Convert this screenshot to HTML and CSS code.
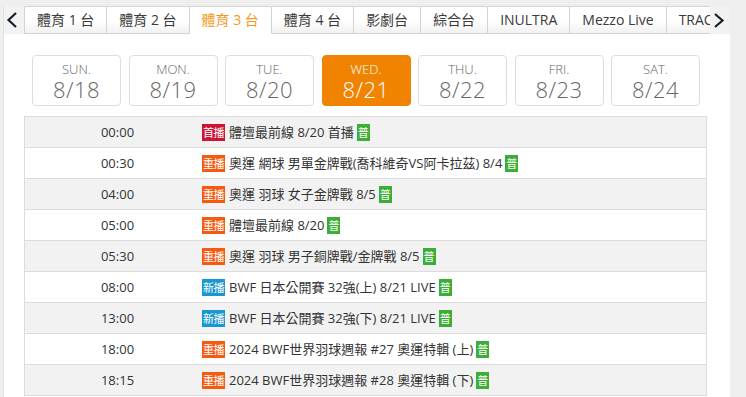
FILE: index.html
```html
<!DOCTYPE html>
<html lang="zh-Hant">
<head>
    <meta charset="UTF-8">
    <meta name="viewport" content="width=device-width, initial-scale=1.0">
    <title>節目表</title>
    <link rel="stylesheet" href="styles.css">
</head>
<body>
    <div class="wrap">
        <div class="tabbar">
            <button class="arrow prev" aria-label="上一頁">
                <svg width="20" height="28" viewBox="0 0 20 28"><polyline points="12,7 4.5,14 12,21" fill="none" stroke="#16202c" stroke-width="2.2"/></svg>
            </button>
            <div class="tabs">
                <ul>
                    <li>體育 1 台</li>
                    <li>體育 2 台</li>
                    <li class="active">體育 3 台</li>
                    <li>體育 4 台</li>
                    <li>影劇台</li>
                    <li>綜合台</li>
                    <li>INULTRA</li>
                    <li>Mezzo Live</li>
                    <li>TRACE Sport</li>
                </ul>
            </div>
            <button class="arrow next" aria-label="下一頁">
                <svg width="20" height="28" viewBox="0 0 20 28"><polyline points="5,8 12.5,14.5 5,21" fill="none" stroke="#16202c" stroke-width="2.2"/></svg>
            </button>
        </div>

        <div class="days">
            <div class="day"><span class="dow">SUN.</span><span class="date">8/18</span></div>
            <div class="day"><span class="dow">MON.</span><span class="date">8/19</span></div>
            <div class="day"><span class="dow">TUE.</span><span class="date">8/20</span></div>
            <div class="day active"><span class="dow">WED.</span><span class="date">8/21</span></div>
            <div class="day"><span class="dow">THU.</span><span class="date">8/22</span></div>
            <div class="day"><span class="dow">FRI.</span><span class="date">8/23</span></div>
            <div class="day"><span class="dow">SAT.</span><span class="date">8/24</span></div>
        </div>

        <table class="schedule">
            <tr>
                <td class="time">00:00</td>
                <td class="prog"><span class="tag first">首播</span>體壇最前線 8/20 首播<span class="rate">普</span></td>
            </tr>
            <tr>
                <td class="time">00:30</td>
                <td class="prog"><span class="tag rerun">重播</span>奧運 網球 男單金牌戰(喬科維奇VS阿卡拉茲) 8/4<span class="rate">普</span></td>
            </tr>
            <tr>
                <td class="time">04:00</td>
                <td class="prog"><span class="tag rerun">重播</span>奧運 羽球 女子金牌戰 8/5<span class="rate">普</span></td>
            </tr>
            <tr>
                <td class="time">05:00</td>
                <td class="prog"><span class="tag rerun">重播</span>體壇最前線 8/20<span class="rate">普</span></td>
            </tr>
            <tr>
                <td class="time">05:30</td>
                <td class="prog"><span class="tag rerun">重播</span>奧運 羽球 男子銅牌戰/金牌戰 8/5<span class="rate">普</span></td>
            </tr>
            <tr>
                <td class="time">08:00</td>
                <td class="prog"><span class="tag new">新播</span>BWF 日本公開賽 32強(上) 8/21 LIVE<span class="rate">普</span></td>
            </tr>
            <tr>
                <td class="time">13:00</td>
                <td class="prog"><span class="tag new">新播</span>BWF 日本公開賽 32強(下) 8/21 LIVE<span class="rate">普</span></td>
            </tr>
            <tr>
                <td class="time">18:00</td>
                <td class="prog"><span class="tag rerun">重播</span>2024 BWF世界羽球週報 #27 奧運特輯 (上)<span class="rate">普</span></td>
            </tr>
            <tr>
                <td class="time">18:15</td>
                <td class="prog"><span class="tag rerun">重播</span>2024 BWF世界羽球週報 #28 奧運特輯 (下)<span class="rate">普</span></td>
            </tr>
        </table>
    </div>
</body>
</html>
```

FILE: styles.css
```css
body {
    margin: 0;
    background-color: #efefef;
    font-family: "Open Sans", "Noto Sans CJK TC", sans-serif;
    color: #333333;
    font-size: 14px;
}

.wrap {
    margin: 6px 0 0 3px;
    width: 726px;
    min-height: 400px;
    background: #ffffff;
    border-left: 1px solid #e2e2e2;
}

.tabbar {
    display: flex;
    height: 28px;
}

.arrow {
    width: 20px;
    height: 28px;
    padding: 0;
    border: none;
    background: #f2f2f2;
    flex-shrink: 0;
    cursor: pointer;
}

.arrow svg {
    display: block;
}

.tabs {
    flex: 1;
    overflow: hidden;
    background: #efefef;
}

.tabs ul {
    display: flex;
    margin: 0;
    padding: 0;
    list-style: none;
    height: 28px;
}

.tabs li {
    flex-shrink: 0;
    padding: 0 12px;
    line-height: 26px;
    white-space: nowrap;
    border: 1px solid #d3d3d3;
    border-left: none;
    background: linear-gradient(#ffffff 55%, #f1f1f1);
    color: #3a3a3a;
}

.tabs li:first-child {
    border-left: 1px solid #d3d3d3;
}

.tabs li.active {
    background: #ffffff;
    border-bottom-color: #ffffff;
    color: #f39a1e;
}

.days {
    display: grid;
    grid-template-columns: repeat(7, 1fr);
    gap: 7.5px;
    width: 668px;
    margin: 21px 0 0 28px;
}

.day {
    display: flex;
    flex-direction: column;
    align-items: center;
    height: 49px;
    border: 1px solid #dddddd;
    border-radius: 4px;
    color: #666666;
}

.day .dow {
    margin-top: 6px;
    font-size: 13px;
    line-height: 14px;
    font-weight: 300;
}

.day .date {
    font-size: 22px;
    line-height: 26px;
    font-weight: 300;
    letter-spacing: 0.5px;
}

.day.active {
    background: #f08300;
    border-color: #f08300;
    color: #ffffff;
}

.schedule {
    margin: 10px 0 0 20px;
    width: 683px;
    border-collapse: collapse;
    border: 1px solid #dcdcdc;
    font-size: 13px;
}

.schedule td {
    height: 30px;
    padding: 0;
    border-top: 1px solid #dcdcdc;
    vertical-align: middle;
}

.schedule tr:nth-child(odd) td {
    background: #f2f2f2;
}

.schedule .time {
    width: 169px;
    padding-left: 8px;
    text-align: center;
}

.schedule .prog {
    white-space: nowrap;
}

.tag {
    display: inline-block;
    width: 23px;
    height: 17px;
    margin-right: 4px;
    font-size: 11px;
    line-height: 17px;
    text-align: center;
    color: #ffffff;
    vertical-align: middle;
    position: relative;
    top: -1px;
    letter-spacing: -0.5px;
}

.tag.first {
    background: #cf1332;
}

.tag.rerun {
    background: #f55a0f;
}

.tag.new {
    background: #1997cf;
}

.rate {
    display: inline-block;
    width: 13px;
    height: 17px;
    margin-left: 3px;
    font-size: 11px;
    line-height: 17px;
    text-align: center;
    color: #ffffff;
    background: #3bae35;
    vertical-align: middle;
    position: relative;
    top: -1px;
}
```
